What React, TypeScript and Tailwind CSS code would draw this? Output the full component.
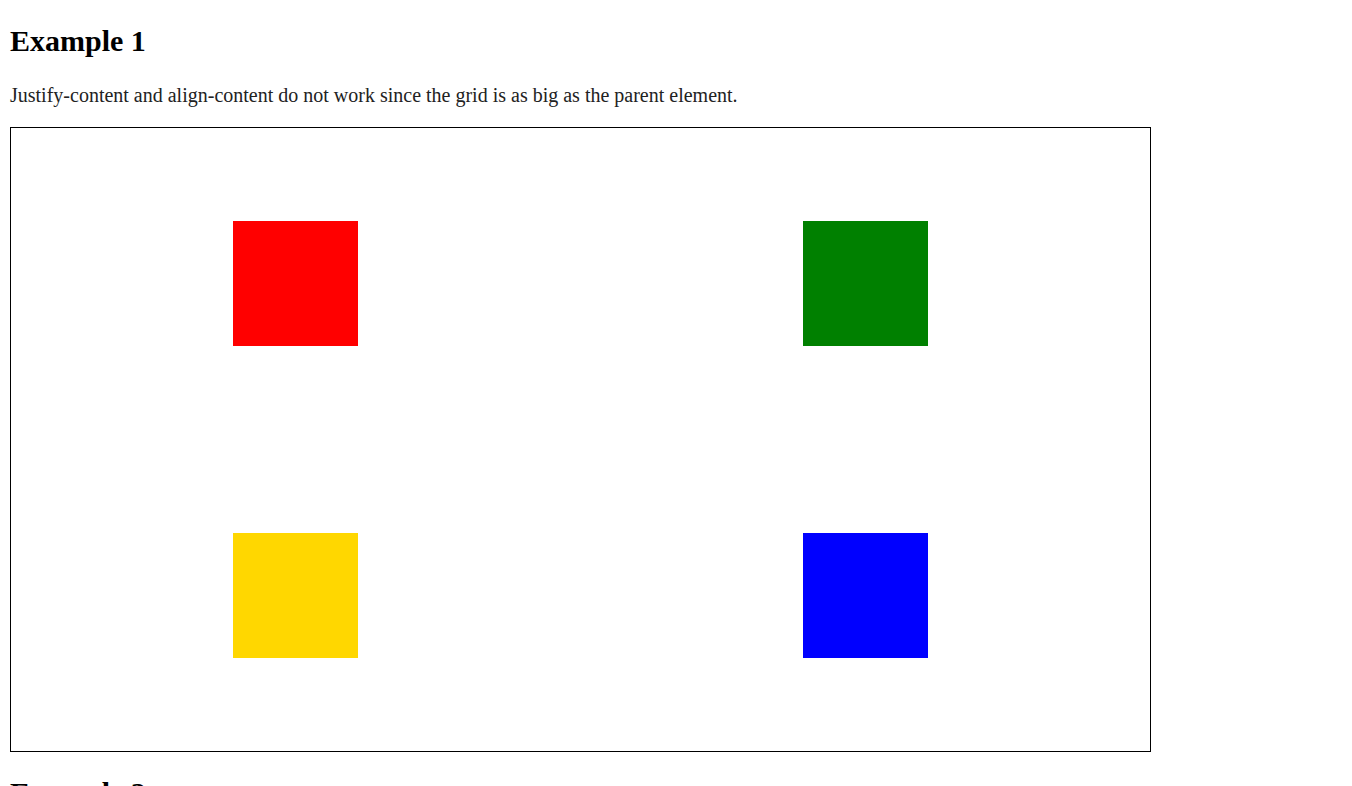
export default function App() {
  return (
    <div
      className="flex flex-col px-[10px] bg-white text-black min-h-[786px]"
      style={{ fontFamily: '"Liberation Serif", "Times New Roman", serif' }}
    >
      <h1 className="mt-[24px] text-[30px] leading-[34px] font-bold">Example 1</h1>
      <p className="mt-[26px] text-[20px] leading-[23px] text-[#222]">
        Justify-content and align-content do not work since the grid is as big as the parent element.
      </p>
      <div className="mt-[20px] w-[1141px] h-[625px] border border-black grid grid-cols-2 grid-rows-2 place-items-center">
        <div className="w-[125px] h-[125px] bg-[#ff0000]" />
        <div className="w-[125px] h-[125px] bg-[#008000]" />
        <div className="w-[125px] h-[125px] bg-[#ffd700]" />
        <div className="w-[125px] h-[125px] bg-[#0000ff]" />
      </div>
      <h1 className="mt-[24px] text-[30px] leading-[34px] font-bold">Example 2</h1>
    </div>
  );
}
